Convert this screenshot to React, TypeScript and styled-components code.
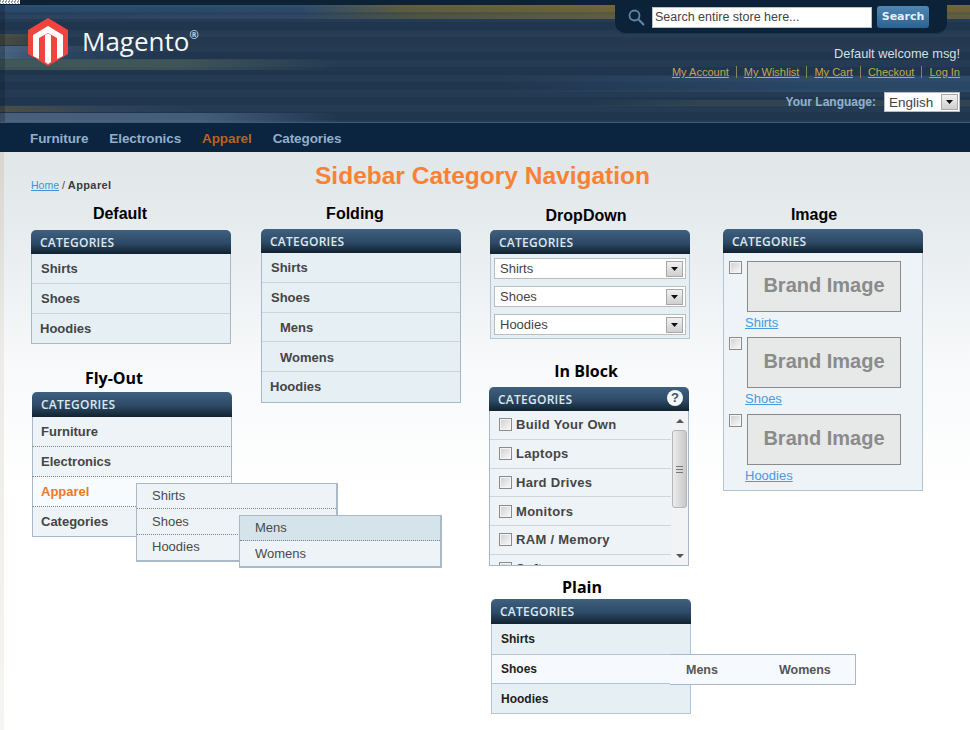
import React from 'react'
import styled, { createGlobalStyle } from 'styled-components'

const GlobalStyle = createGlobalStyle`
  html, body {
    margin: 0;
    padding: 0;
    background: #fff;
    font-family: "Liberation Sans", Arial, sans-serif;
  }
`

const Checkbox = () => <CheckBoxBox />

const SelectArrow = () => (
	<ArrowButton>
		<svg width="7" height="4" viewBox="0 0 7 4"><path d="M0 0h7L3.500 4z" fill="#111" /></svg>
	</ArrowButton>
)

const Logo = () => (
	<svg width="42" height="48" viewBox="0 0 42 48">
		<path d="M21 0 41 12V36L21 48 1 36V12Z" fill="#f0443e" />
		<path d="M21 8 36 17V38L30 41V20L21 15 12 20V41L6 38V17Z" fill="#fff" />
		<path d="M18 17 21 15.500 24 17V44L21 46 18 44Z" fill="#fff" />
	</svg>
)

const SearchIcon = () => (
	<svg width="17" height="17" viewBox="0 0 17 17" fill="none" stroke="#5f84a5" strokeWidth="1.800">
		<circle cx="6.500" cy="6.500" r="5" />
		<path d="M10.300 10.300 16 16" strokeWidth="2.200" />
	</svg>
)

const Header = () => (
	<HeaderBar>
		<Noise />
		<LogoWrap>
			<Logo />
			<LogoText>Magento<sup>®</sup></LogoText>
		</LogoWrap>
		<HeaderRight>
			<SearchPanel>
				<SearchIcon />
				<SearchInput>Search entire store here...</SearchInput>
				<SearchButton>Search</SearchButton>
			</SearchPanel>
			<Welcome>Default welcome msg!</Welcome>
			<TopLinks>
				{['My Account', 'My Wishlist', 'My Cart', 'Checkout', 'Log In'].map(link => (
					<TopLink key={link}>{link}</TopLink>
				))}
			</TopLinks>
			<Language>
				<LanguageLabel>Your Language:</LanguageLabel>
				<LanguageSelect>English<SelectArrow /></LanguageSelect>
			</Language>
		</HeaderRight>
	</HeaderBar>
)

const Nav = () => (
	<NavBar>
		<NavItem>Furniture</NavItem>
		<NavItem>Electronics</NavItem>
		<NavItem $active>Apparel</NavItem>
		<NavItem>Categories</NavItem>
	</NavBar>
)

const BlockHead = ({ help, tall }: { help?: boolean; tall?: boolean }) => (
	<BlockTitle $tall={tall}>
		CATEGORIES
		{help && <HelpBadge>?</HelpBadge>}
	</BlockTitle>
)

const App = () => {
	const inBlock = ['Build Your Own', 'Laptops', 'Hard Drives', 'Monitors', 'RAM / Memory', 'Software']

	return (
		<Page>
			<GlobalStyle />
			<Header />
			<Nav />
			<Content>
				<TitleRow>
					<Breadcrumb><HomeLink>Home</HomeLink> / <strong>Apparel</strong></Breadcrumb>
					<PageTitle>Sidebar Category Navigation</PageTitle>
				</TitleRow>
				<Columns>
					<Column>
						<Section $top={1}>
							<Heading $gap={6} $pull={11}>Default</Heading>
							<Block>
								<BlockHead />
								<Row>Shirts</Row>
								<Row>Shoes</Row>
								<Row $last $nudge={-1}>Hoodies</Row>
							</Block>
						</Section>
						<Section $top={24} $shift={1}>
							<Heading $gap={4} $alt $pull={18}>Fly-Out</Heading>
							<Block>
								<BlockHead tall />
								<DottedRow>Furniture</DottedRow>
								<DottedRow>Electronics</DottedRow>
								<DottedRow $active>Apparel</DottedRow>
								<DottedRow $last>Categories</DottedRow>
								<FlyOut $left={104} $top={91} $width={202}>
									<FlyRow>Shirts</FlyRow>
									<FlyRow>Shoes</FlyRow>
									<FlyRow $last>Hoodies</FlyRow>
								</FlyOut>
								<FlyOut $left={207} $top={123} $width={203}>
									<FlyRow $hover>Mens</FlyRow>
									<FlyRow $last>Womens</FlyRow>
								</FlyOut>
							</Block>
						</Section>
					</Column>

					<Column $before={30}>
						<Section $top={1}>
							<Heading $gap={5} $pull={6}>Folding</Heading>
							<Block>
								<BlockHead />
								<Row>Shirts</Row>
								<Row>Shoes</Row>
								<Row $indent>Mens</Row>
								<Row $indent>Womens</Row>
								<Row $last $nudge={-1}>Hoodies</Row>
							</Block>
						</Section>
					</Column>

					<Column $before={29}>
						<Section $top={3}>
							<Heading $gap={4} $pull={4}>DropDown</Heading>
							<Block>
								<BlockHead />
								<SelectStack>
									{['Shirts', 'Shoes', 'Hoodies'].map(name => (
										<FakeSelect key={name}>{name}<SelectArrow /></FakeSelect>
									))}
								</SelectStack>
							</Block>
						</Section>
						<Section $top={22} $shift={-1}>
							<Heading $gap={6} $alt $pull={3}>In Block</Heading>
							<Block>
								<BlockHead help />
								<ScrollArea>
									<CheckList>
										{inBlock.map(name => (
											<CheckRow key={name}><Checkbox />{name}</CheckRow>
										))}
									</CheckList>
									<ScrollBar>
										<ScrollArrow $up />
										<ScrollThumb><Grip /></ScrollThumb>
										<ScrollArrow />
									</ScrollBar>
								</ScrollArea>
							</Block>
						</Section>
						<Section $top={11} $shift={1}>
							<Heading $gap={2} $alt $pull={9}>Plain</Heading>
							<Block>
								<BlockHead tall />
								<PlainRow>Shirts</PlainRow>
								<PlainRow $open>Shoes</PlainRow>
								<PlainRow $last>Hoodies</PlainRow>
								<PlainFly>
									<PlainLink>Mens</PlainLink>
									<PlainLink>Womens</PlainLink>
								</PlainFly>
							</Block>
						</Section>
					</Column>

					<Column $before={33}>
						<Section $top={2}>
							<Heading $gap={4} $pull={9}>Image</Heading>
							<Block>
								<BlockHead />
								<BrandList>
									{['Shirts', 'Shoes', 'Hoodies'].map(name => (
										<BrandItem key={name}>
											<BrandTop>
												<Checkbox />
												<BrandBox>Brand Image</BrandBox>
											</BrandTop>
											<BrandLink>{name}</BrandLink>
										</BrandItem>
									))}
								</BrandList>
							</Block>
						</Section>
					</Column>
				</Columns>
			</Content>
		</Page>
	)
}

export default App

const Page = styled.div`
  width: 970px;
  height: 730px;
  overflow: hidden;
  position: relative;
`

const HeaderBar = styled.header`
  position: relative;
  box-sizing: border-box;
  height: 123px;
  display: flex;
  justify-content: space-between;
  border-bottom: 1px solid #3f5a74;
  background-color: #20364f;
  background-image:
    linear-gradient(#0d2235, #0d2235),
    linear-gradient(rgba(10, 25, 40, 0.3), rgba(10, 25, 40, 0.3)),
    repeating-linear-gradient(rgba(255, 255, 255, 0.025) 0 7px, transparent 7px 15px),
    linear-gradient(90deg, #2a4a6c 0, #2b4a6a 300px, #5c5b42 400px, #6e6338 615px),
    linear-gradient(90deg, #263f5b 0, #2a4360 300px, #48503f 420px, #5a5a3e 615px),
    linear-gradient(90deg, #4c4c3d, #24394f 60px),
    linear-gradient(90deg, #49627f, #2a435f 70px, #20364f 170px),
    linear-gradient(90deg, #3c5356, #3a5155 180px, #20364f 340px),
    linear-gradient(90deg, #20364f 500px, #2a4766 820px, #2a4766),
    linear-gradient(90deg, #20364f 580px, #2f4450 700px, #2f4450),
    linear-gradient(90deg, #4a4a3e, #2a3f55 100px, #20364f 200px),
    linear-gradient(90deg, #495f7a, #455c78 200px, #20364f 340px);
  background-size:
    100% 5px,
    5px 123px,
    100% 100%,
    100% 7px,
    100% 7px,
    100% 11px,
    100% 13px,
    100% 11px,
    100% 16px,
    100% 6px,
    100% 12px,
    100% 9px;
  background-position:
    0 0,
    0 0,
    0 0,
    0 5px,
    0 12px,
    0 34px,
    0 46px,
    0 59px,
    0 76px,
    0 100px,
    0 100px,
    0 113px;
  background-repeat: no-repeat;
`

const Noise = styled.div`
  position: absolute;
  left: 0;
  top: 0;
  width: 20px;
  height: 4px;
  background: repeating-conic-gradient(#fff 0 25%, #8d99a3 0 50%) 0 0 / 3px 3px;
`

const LogoWrap = styled.div`
  display: flex;
  align-items: flex-start;
  gap: 13px;
  padding: 18px 0 0 27px;
`

const LogoText = styled.div`
  margin-top: 5px;
  font-family: "Open Sans", sans-serif;
  font-size: 26px;
  line-height: 36px;
  color: #f4f6f8;

  sup {
    font-size: 11px;
    line-height: 0;
    vertical-align: 12px;
  }
`

const HeaderRight = styled.div`
  display: flex;
  flex-direction: column;
  align-items: flex-end;
  padding-right: 10px;
`

const SearchPanel = styled.div`
  box-sizing: border-box;
  width: 332px;
  height: 34px;
  margin-right: 13px;
  padding: 1px 18px 0 13px;
  display: flex;
  align-items: center;
  background: #0c2238;
  border-radius: 0 0 11px 11px;
  border-bottom: 1px solid #1a3550;

  svg {
    flex: none;
    margin-right: 7px;
  }
`

const SearchInput = styled.div`
  box-sizing: border-box;
  width: 220px;
  height: 21px;
  margin-right: 5px;
  padding-left: 2px;
  background: #fff;
  border: 1px solid #b8c2ca;
  font-size: 12.500px;
  line-height: 19px;
  color: #444;
`

const SearchButton = styled.div`
  width: 52px;
  height: 22px;
  border-radius: 3px;
  background: linear-gradient(#4f87b4, #2c628f);
  font-family: "DejaVu Sans", sans-serif;
  font-weight: 700;
  font-size: 11px;
  line-height: 22px;
  text-align: center;
  color: #e6f0f7;
`

const Welcome = styled.div`
  margin-top: 12px;
  font-size: 12.800px;
  line-height: 16px;
  color: #d5dfe8;
`

const TopLinks = styled.div`
  display: flex;
  margin-top: 4px;
`

const TopLink = styled.span`
  font-size: 11px;
  line-height: 12px;
  color: #c7a54e;
  text-decoration: underline;
  padding-left: 7px;
  margin-left: 7px;
  border-left: 1px solid #8c8458;

  &:first-child {
    border-left: 0;
    margin-left: 0;
    padding-left: 0;
  }
`

const Language = styled.div`
  display: flex;
  align-items: center;
  gap: 8px;
  margin-top: 14px;
`

const LanguageLabel = styled.span`
  font-size: 12px;
  font-weight: 700;
  color: #8fb2d2;
`

const LanguageSelect = styled.div`
  box-sizing: border-box;
  width: 76px;
  height: 20px;
  padding: 0 1px 0 4px;
  display: flex;
  align-items: center;
  justify-content: space-between;
  background: #fff;
  border: 1px solid #b9bdc0;
  font-size: 13.500px;
  color: #444;
`

const ArrowButton = styled.span`
  box-sizing: border-box;
  width: 17px;
  height: 16px;
  display: flex;
  align-items: center;
  justify-content: center;
  background: linear-gradient(#f0f0f0, #cfcfcf);
  border: 1px solid #a8a8a8;
`

const NavBar = styled.nav`
  box-sizing: border-box;
  height: 29px;
  padding: 1px 0 0 30px;
  display: flex;
  align-items: center;
  gap: 21px;
  background: #0b2440;
`

const NavItem = styled.span<{ $active?: boolean }>`
  font-size: 13.500px;
  font-weight: 700;
  letter-spacing: -0.1px;
  color: ${p => (p.$active ? '#b5651f' : '#8fb0cc')};
`

const Content = styled.main`
  box-sizing: border-box;
  height: 578px;
  padding: 0 36px 0 27px;
  border-left: 4px solid;
  border-image: linear-gradient(#d8d5d0, #ecebe8 200px, #f6f5f3) 1;
  background: linear-gradient(#e1e6e9 0, #e6ebee 70px, #f7f9fa 210px, #fff 340px);
`

const TitleRow = styled.div`
  height: 51px;
  display: grid;
  grid-template-columns: 1fr auto 1fr;
`

const Breadcrumb = styled.div`
  margin-top: 26px;
  font-size: 10.500px;
  line-height: 14px;
  color: #444;

  strong {
    font-size: 11px;
    font-weight: 700;
    letter-spacing: 0.4px;
    color: #3a3a3a;
  }
`

const HomeLink = styled.span`
  color: #3f90dc;
  text-decoration: underline;
`

const PageTitle = styled.h1`
  margin: 9px 0 0;
  font-size: 24.500px;
  line-height: 30px;
  font-weight: 700;
  color: #f98232;
  white-space: nowrap;
`

const Columns = styled.div`
  display: flex;
  align-items: flex-start;
`

const Column = styled.div<{ $before?: number }>`
  width: 200px;
  flex: none;
  margin-left: ${p => p.$before ?? 0}px;
`

const Section = styled.section<{ $top?: number; $shift?: number }>`
  width: 200px;
  margin-top: ${p => p.$top ?? 0}px;
  margin-left: ${p => p.$shift ?? 0}px;
`

// the headings in the source sit left of the block centre, $pull is that offset
const Heading = styled.h2<{ $gap: number; $alt?: boolean; $pull: number }>`
  margin: 0 0 ${p => p.$gap}px;
  padding-right: ${p => p.$pull * 2}px;
  font-family: ${p => (p.$alt ? '"Open Sans", sans-serif' : '"Liberation Sans", sans-serif')};
  font-size: 16px;
  line-height: 20px;
  font-weight: 700;
  text-align: center;
  color: #000;
`

const Block = styled.div`
  position: relative;
  background: #e6eff3;
`

const BlockTitle = styled.div<{ $tall?: boolean }>`
  box-sizing: border-box;
  height: ${p => (p.$tall ? 25 : 24)}px;
  padding-left: 9px;
  display: flex;
  align-items: center;
  justify-content: space-between;
  border-radius: 5px 5px 0 0;
  background: linear-gradient(#3f6080, #2d4a66 55%, #10222f);
  font-family: "Open Sans", sans-serif;
  font-size: 12px;
  font-weight: 600;
  letter-spacing: 0.25px;
  color: #dde7ef;
`

const HelpBadge = styled.span`
  width: 16px;
  height: 16px;
  margin: 0 6px 2px 0;
  border-radius: 50%;
  background: #f4f6f8;
  text-align: center;
  font-family: "Liberation Sans", sans-serif;
  font-size: 13px;
  font-weight: 700;
  line-height: 16px;
  color: #3a5470;
`

const Row = styled.div<{ $last?: boolean; $indent?: boolean; $nudge?: number }>`
  box-sizing: border-box;
  height: ${p => (p.$last ? 30.400 : 29.800)}px;
  padding-left: ${p => (p.$indent ? 18 : 9) + (p.$nudge ?? 0)}px;
  display: flex;
  align-items: center;
  border: 1px solid #a6b9cb;
  border-width: 0 1px ${p => (p.$last ? 1 : 0)}px;
  box-shadow: ${p => (p.$last ? 'none' : 'inset 0 -1px 0 #ccd4d9')};
  font-size: 13px;
  font-weight: 700;
  color: #454545;
`

const DottedRow = styled.div<{ $last?: boolean; $active?: boolean }>`
  box-sizing: border-box;
  height: 30px;
  padding-left: 8px;
  display: flex;
  align-items: center;
  background: ${p => (p.$active ? '#f8fbfe' : '#edf3f7')};
  border: 1px solid #a6b9cb;
  border-width: 0 1px;
  border-bottom: ${p => (p.$last ? '1px solid #a6b9cb' : '1px dotted #77858f')};
  font-size: 13px;
  font-weight: 700;
  color: ${p => (p.$active ? '#ea7a26' : '#454545')};
`

const FlyOut = styled.div<{ $left: number; $top: number; $width: number }>`
  position: absolute;
  left: ${p => p.$left}px;
  top: ${p => p.$top}px;
  box-sizing: border-box;
  width: ${p => p.$width}px;
  background: #edf3f7;
  border: 2px solid #a9b9c6;
  border-width: 1px 2px 2px 1px;
`

const FlyRow = styled.div<{ $last?: boolean; $hover?: boolean }>`
  box-sizing: border-box;
  height: ${p => (p.$last ? 25 : 25.500)}px;
  padding: 0 0 1px 15px;
  display: flex;
  align-items: center;
  background: ${p => (p.$hover ? '#d5e3ea' : 'transparent')};
  border-bottom: ${p => (p.$last ? '0' : '1px dotted #77858f')};
  font-size: 13px;
  color: #4a4a4a;
`

const SelectStack = styled.div`
  box-sizing: border-box;
  height: 85px;
  padding: 4px 3px 3px;
  display: flex;
  flex-direction: column;
  gap: 7px;
  border: 1px solid #b6c6d6;
  border-top: 0;
`

const FakeSelect = styled.div`
  box-sizing: border-box;
  height: 21px;
  padding: 0 2px 0 5px;
  display: flex;
  align-items: center;
  justify-content: space-between;
  background: #fff;
  border: 1px solid #b9bdc0;
  font-size: 13px;
  color: #444;
`

const ScrollArea = styled.div`
  box-sizing: border-box;
  height: 155px;
  display: flex;
  overflow: hidden;
  background: #edf3f7;
  border: 1px solid #a6b9cb;
  border-top: 0;
`

const CheckList = styled.div`
  flex: 1;
  min-width: 0;
`

const CheckRow = styled.div`
  box-sizing: border-box;
  height: 28.750px;
  padding-left: 9px;
  display: flex;
  align-items: center;
  gap: 4px;
  border-bottom: 1px solid #cdd5da;
  font-size: 13px;
  font-weight: 700;
  letter-spacing: 0.3px;
  color: #454545;
`

const CheckBoxBox = styled.span`
  box-sizing: border-box;
  flex: none;
  width: 13px;
  height: 13px;
  background: linear-gradient(135deg, #cfcfcf, #fafafa);
  border: 1px solid #8b8b8b;
  box-shadow: inset 0 0 0 1px #f4f4f4;
`

const ScrollBar = styled.div`
  flex: none;
  width: 17px;
  display: flex;
  flex-direction: column;
  align-items: center;
  background: #f1f3f4;
`

const ScrollArrow = styled.span<{ $up?: boolean }>`
  width: 0;
  height: 0;
  margin: ${p => (p.$up ? '8px 0 0' : 'auto 0 7px')};
  border-left: 4px solid transparent;
  border-right: 4px solid transparent;
  border-bottom: ${p => (p.$up ? '4px solid #555' : '0')};
  border-top: ${p => (p.$up ? '0' : '4px solid #555')};
`

const ScrollThumb = styled.div`
  box-sizing: border-box;
  width: 15px;
  height: 78px;
  margin-top: 7px;
  display: flex;
  align-items: center;
  justify-content: center;
  border: 1px solid #b5b5b5;
  border-radius: 3px;
  background: linear-gradient(90deg, #ececec, #c8c8c8);
`

const Grip = styled.span`
  width: 7px;
  height: 7px;
  background: repeating-linear-gradient(#777 0 1px, transparent 1px 3px);
`

const PlainRow = styled.div<{ $last?: boolean; $open?: boolean }>`
  box-sizing: border-box;
  height: 30px;
  padding-left: 9px;
  display: flex;
  align-items: center;
  background: ${p => (p.$open ? '#f6fafe' : '#e6eff3')};
  border: 1px solid #b3c4d6;
  border-width: 0 1px;
  border-top: ${p => (p.$open ? '1px solid #b3c4d6' : '0')};
  border-bottom: ${p => (p.$open || p.$last ? '1px solid #b3c4d6' : '0')};
  font-size: 12px;
  font-weight: 700;
  color: #1d1d1d;
`

const PlainFly = styled.div`
  position: absolute;
  left: 179px;
  top: 55px;
  box-sizing: border-box;
  width: 186px;
  height: 31px;
  padding-left: 16px;
  display: flex;
  align-items: center;
  gap: 61px;
  background: #f6fafe;
  border: 1px solid #a5b8cf;
  border-left: 0;
`

const PlainLink = styled.span`
  font-size: 12.500px;
  font-weight: 700;
  color: #555;
`

const BrandList = styled.div`
  box-sizing: border-box;
  height: 238px;
  padding: 8px 0 0 5px;
  background: #edf3f7;
  border: 1px solid #b3c4d6;
  border-top: 0;
`

const BrandItem = styled.div`
  height: 76.400px;
`

const BrandTop = styled.div`
  display: flex;
  align-items: flex-start;
  gap: 5px;
`

const BrandBox = styled.div`
  box-sizing: border-box;
  width: 154px;
  height: 51px;
  padding-bottom: 2px;
  display: flex;
  align-items: center;
  justify-content: center;
  background: #e6e9e8;
  border: 1px solid #8a8a8a;
  font-size: 20px;
  font-weight: 700;
  color: #8b8b8b;
`

const BrandLink = styled.div`
  margin: 4px 0 0 16px;
  font-size: 13px;
  line-height: 14px;
  color: #4a9ae0;
  text-decoration: underline;
`
